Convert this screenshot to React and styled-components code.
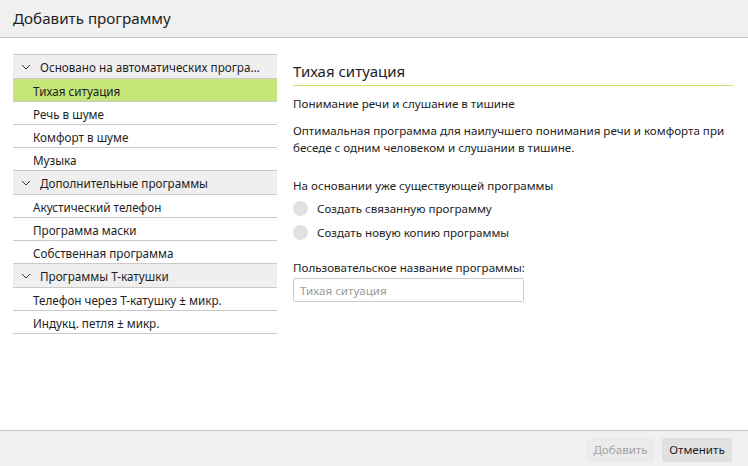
import React from "react";
import styled, { createGlobalStyle } from "styled-components";

const Global = createGlobalStyle`
  html, body { margin: 0; padding: 0; background: #fff; }
  body { font-family: "Noto Sans", "Open Sans", sans-serif; color: #1e1e1e; }
  * { box-sizing: border-box; }
`;

const Dialog = styled.div`
  width: 748px;
  height: 466px;
  display: flex;
  flex-direction: column;
  overflow: hidden;
`;

const Header = styled.div`
  height: 38px;
  flex: none;
  background: #f0f0f0;
  border-bottom: 1px solid #c9c9c9;
  display: flex;
  align-items: center;
  padding-left: 13px;
  padding-bottom: 1px;
  font-size: 15.2px;
  color: #1e1e1e;
`;

const Body = styled.div`
  flex: 1;
  display: flex;
  gap: 16px;
  padding: 16px 15px 0 13px;
`;

const List = styled.div`
  width: 264px;
  flex: none;
  border-top: 1px solid #c9c9c9;
  align-self: flex-start;
`;

const GroupHeader = styled.div`
  height: 24px;
  background: #efefef;
  border-bottom: 1px solid #c9c9c9;
  display: flex;
  align-items: center;
  padding-left: 8px;
  padding-top: 1px;
  font-size: 11.7px;
  white-space: nowrap;
  overflow: hidden;
`;

const GroupLabel = styled.span`
  overflow: hidden;
  text-overflow: ellipsis;
  padding-right: 12px;
`;

const Chevron = styled.svg`
  width: 10px;
  height: 10px;
  margin-right: 9px;
  flex: none;
`;

const Item = styled.div`
  height: 23px;
  border-bottom: 1px solid #c9c9c9;
  display: flex;
  align-items: center;
  padding-left: 20px;
  padding-top: 1px;
  font-size: 11.7px;
  background: ${(p) => (p.$active ? "#c6e67a" : "#fff")};
`;

const Detail = styled.div`
  flex: 1;
  display: flex;
  flex-direction: column;
  font-size: 11.6px;
`;

const Title = styled.div`
  font-size: 15px;
  padding-top: 7px;
  padding-bottom: 4px;
  border-bottom: 1px solid #c3e56d;
  line-height: 20px;
`;

const Subtitle = styled.div`
  margin-top: 9px;
  line-height: 17px;
`;

const Description = styled.div`
  margin-top: 10px;
  line-height: 17px;
`;

const Section = styled.div`
  margin-top: 21px;
  line-height: 17px;
`;

const RadioRow = styled.label`
  display: flex;
  align-items: center;
  height: 23px;
  gap: 9px;
  margin-top: ${(p) => (p.$first ? "3px" : "1px")};
`;

const RadioCircle = styled.span`
  width: 15px;
  height: 15px;
  border-radius: 50%;
  background: #e1e1e1;
  flex: none;
`;

const FieldLabel = styled.div`
  margin-top: 15px;
  line-height: 17px;
`;

const Input = styled.input`
  margin-top: 2px;
  width: 231px;
  height: 24px;
  border: 1px solid #cccccc;
  border-radius: 2px;
  padding: 0 6px;
  font-family: inherit;
  font-size: 11.6px;
  color: #1e1e1e;
  outline: none;
  &::placeholder { color: #9a9a9a; }
`;

const Footer = styled.div`
  height: 36px;
  flex: none;
  background: #f0f0f0;
  border-top: 1px solid #c9c9c9;
  display: flex;
  justify-content: flex-end;
  align-items: center;
  gap: 8px;
  padding: 2px 16px 0 0;
`;

const Button = styled.button`
  height: 24px;
  width: ${(p) => p.$w}px;
  padding: 0;
  border: none;
  border-radius: 2px;
  font-family: inherit;
  font-size: 11.6px;
  background: ${(p) => (p.disabled ? "#ebebeb" : "#e1e1e1")};
  color: ${(p) => (p.disabled ? "#a3a3a3" : "#1e1e1e")};
`;

const ChevronIcon = () => (
  <Chevron viewBox="0 0 10 10">
    <path d="M1 3 L5 7 L9 3" fill="none" stroke="#333" strokeWidth="1" />
  </Chevron>
);

const groups = [
  {
    title: "Основано на автоматических программах",
    items: ["Тихая ситуация", "Речь в шуме", "Комфорт в шуме", "Музыка"],
  },
  {
    title: "Дополнительные программы",
    items: ["Акустический телефон", "Программа маски", "Собственная программа"],
  },
  {
    title: "Программы Т-катушки",
    items: ["Телефон через Т-катушку ± микр.", "Индукц. петля ± микр."],
  },
];

export default function App() {
  return (
    <>
      <Global />
      <Dialog>
        <Header>Добавить программу</Header>
        <Body>
          <List>
            {groups.map((g) => (
              <React.Fragment key={g.title}>
                <GroupHeader>
                  <ChevronIcon />
                  <GroupLabel>{g.title}</GroupLabel>
                </GroupHeader>
                {g.items.map((it) => (
                  <Item key={it} $active={it === "Тихая ситуация"}>
                    {it}
                  </Item>
                ))}
              </React.Fragment>
            ))}
          </List>
          <Detail>
            <Title>Тихая ситуация</Title>
            <Subtitle>Понимание речи и слушание в тишине</Subtitle>
            <Description>
              Оптимальная программа для наилучшего понимания речи и комфорта при
              беседе с одним человеком и слушании в тишине.
            </Description>
            <Section>На основании уже существующей программы</Section>
            <RadioRow $first>
              <RadioCircle />
              Создать связанную программу
            </RadioRow>
            <RadioRow>
              <RadioCircle />
              Создать новую копию программы
            </RadioRow>
            <FieldLabel>Пользовательское название программы:</FieldLabel>
            <Input placeholder="Тихая ситуация" />
          </Detail>
        </Body>
        <Footer>
          <Button disabled $w={67}>Добавить</Button>
          <Button $w={70}>Отменить</Button>
        </Footer>
      </Dialog>
    </>
  );
}
